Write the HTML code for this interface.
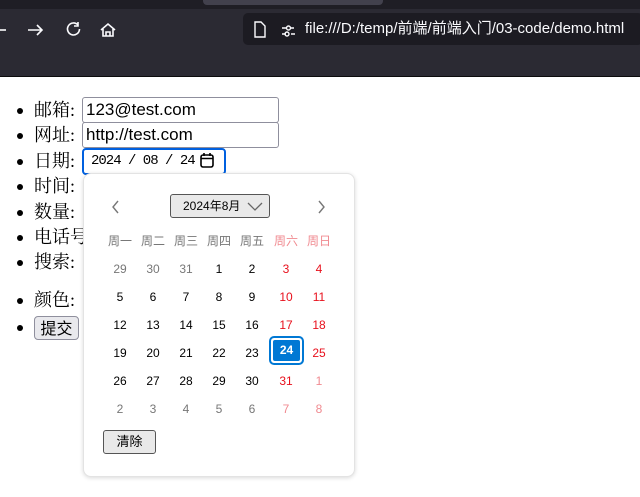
<!DOCTYPE html><html><head><meta charset="utf-8"><style>
*{margin:0;padding:0;box-sizing:border-box}
body{width:640px;height:497px;overflow:hidden;background:#fff;position:relative;font-family:"Liberation Serif","Noto Serif CJK SC",serif}
.tabs{position:absolute;left:0;top:0;width:640px;height:12px;background:#1f1e25}
.tabact{position:absolute;left:203px;top:0;width:180px;height:5px;background:#42414d;border-radius:0 0 4px 4px}
.tool{position:absolute;left:0;top:9px;width:640px;height:68px;background:#2b2a33;border-bottom:1px solid #0c0c0d}
.addr{position:absolute;left:243px;top:13px;width:400px;height:32px;background:#1c1b22;border-radius:5px;color:#fbfbfe;font:15px "Liberation Sans","Noto Sans CJK SC",sans-serif;line-height:32px;padding-left:62px}
.ic{position:absolute}
li{position:absolute;left:34px;font-size:18px;color:#000;line-height:22px;list-style:none}
li:before{content:"";position:absolute;left:-17px;top:9px;width:6px;height:6px;border-radius:50%;background:#000}
.inp{position:absolute;left:82px;width:197px;height:26px;border:1px solid #8f8f9d;border-radius:3px;font:17px "Liberation Sans",sans-serif;padding-left:3px;line-height:24px}
.pop{position:absolute;left:83px;top:173px;width:272px;height:304px;background:#fff;border:1px solid #e3e3e3;border-radius:8px;box-shadow:0 1px 4px rgba(0,0,0,.15);font-family:"Liberation Sans","Noto Sans CJK SC",sans-serif}
.c{position:absolute;width:30px;text-align:center;font-size:12px;line-height:16px}
.g{color:#777}.k{color:#000}.r{color:#e8101c}.rl{color:#f08a90}
</style></head><body>
<div class="tabs"><div class="tabact"></div></div>
<div class="tool"></div>
<svg class="ic" style="left:0;top:20px" width="130" height="22" viewBox="0 0 130 22" fill="none" stroke="#fbfbfe" stroke-width="1.6">
<path d="M0 10h6"/><path d="M28 10h14M37 5l5 5-5 5"/><path d="M78 5a6 6 0 1 0 1.5 4M78 2v4h-4"/><path d="M101 10l7-6 7 6M103 9v7h10V9M106 16v-4h4v4"/></svg>
<div class="addr">file:///D:/temp/前端/前端入门/03-code/demo.html</div>
<svg class="ic" style="left:253px;top:21px" width="50" height="18" fill="none" stroke="#fbfbfe" stroke-width="1.4"><path d="M2 1h6l4 4v11H2z"/><path d="M29 7h5M37 7h4M29 13h4M38 13h4"/><circle cx="35.5" cy="7" r="2"/><circle cx="34" cy="13" r="2"/></svg>
<ul>
<li style="top:99px">邮箱:</li><li style="top:124px">网址:</li><li style="top:150px">日期:</li><li style="top:175px">时间:</li><li style="top:201px">数量:</li><li style="top:226px">电话号</li><li style="top:251px">搜索:</li><li style="top:289px">颜色:</li><li style="top:316px">&nbsp;</li>
</ul>
<div class="inp" style="top:97px">123@test.com</div>
<div class="inp" style="top:122px">http://test.com</div>
<div style="position:absolute;left:82px;top:148px;width:144px;height:27px;border:2px solid #0060df;border-radius:4px;font:14px 'Liberation Mono',monospace;letter-spacing:-1px;line-height:23px;padding-left:7px;white-space:nowrap">2024 / 08 / 24</div>
<svg class="ic" style="left:199px;top:152px" width="16" height="17" fill="none" stroke="#000" stroke-width="1.6"><rect x="2" y="3" width="12" height="12" rx="2"/><path d="M2 6.5h12M5 1v3M11 1v3"/></svg>
<div style="position:absolute;left:34px;top:316px;width:45px;height:24px;background:#e9e9ed;border:1px solid #8f8f9d;border-radius:4px;font:16px 'Noto Sans CJK SC',sans-serif;line-height:21px;text-align:center">提交</div>
<div class="pop">
<svg class="ic" style="left:27px;top:26px" width="10" height="14" fill="none" stroke="#777" stroke-width="1.4"><path d="M7 1L2 7l5 6"/></svg>
<svg class="ic" style="left:233px;top:26px" width="10" height="14" fill="none" stroke="#777" stroke-width="1.4"><path d="M2 1l5 6-5 6"/></svg>
<div style="position:absolute;left:86px;top:20px;width:100px;height:24px;background:#e9e9e9;border:1px solid #555;border-radius:3px;font-size:12px;line-height:22px;padding-left:12px">2024年8月</div>
<svg class="ic" style="left:163px;top:28px" width="16" height="10" fill="none" stroke="#666" stroke-width="1.3"><path d="M1 1l7 7 7-7"/></svg>
<div style="position:absolute;left:19px;top:256px;width:53px;height:24px;background:#e9e9e9;border:1px solid #555;border-radius:3px;font-size:13px;line-height:22px;text-align:center">清除</div>
<div id="grid"></div>
</div>
<script>
var g=document.getElementById('grid'),xs=[36,69,102,135,168,202,235],h='';
var hd=['周一','周二','周三','周四','周五','周六','周日'];
hd.forEach(function(t,i){h+='<div class="c '+(i>4?'rl':'g')+'" style="left:'+(xs[i]-15)+'px;top:59px">'+t+'</div>'});
var d=[29,30,31,1,2,3,4,5,6,7,8,9,10,11,12,13,14,15,16,17,18,19,20,21,22,23,24,25,26,27,28,29,30,31,1,2,3,4,5,6,7,8];
d.forEach(function(v,n){var r=Math.floor(n/7),i=n%7,other=(n<3||n>33);var cls=i>4?(other?'rl':'r'):(other?'g':'k');
var top=87+r*28;
if(n==26){h+='<div style="position:absolute;left:'+(xs[i]-17)+'px;top:'+(top-9)+'px;width:35px;height:29px;border:2px solid #0078d4;border-radius:5px;padding:2px"><div style="width:100%;height:100%;background:#0078d4;border-radius:2px;color:#fff;font-weight:bold;font-size:12px;text-align:center;line-height:21px">24</div></div>';return}
h+='<div class="c '+cls+'" style="left:'+(xs[i]-15)+'px;top:'+top+'px">'+v+'</div>'});
g.innerHTML=h;
</script>
</body></html>
